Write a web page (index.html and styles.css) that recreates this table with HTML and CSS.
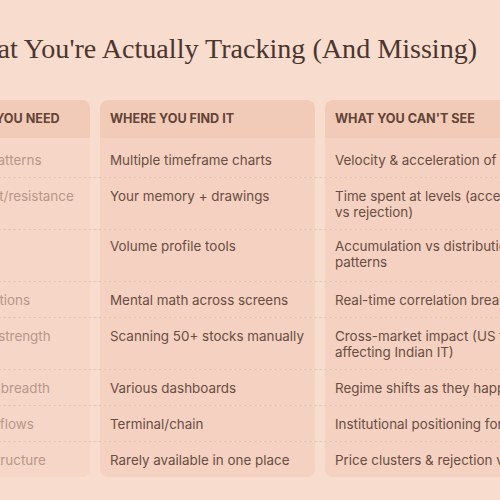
FILE: index.html
```html
<!DOCTYPE html>
<html>
<head>
<meta charset="utf-8">
<link rel="stylesheet" href="styles.css">
</head>
<body>
<div class="page">
  <h1 class="title">What You're Actually Tracking (And Missing)</h1>
  <div class="table">
    <div class="row head">
      <div class="cell c1">WHAT YOU NEED</div>
      <div class="cell c2">WHERE YOU FIND IT</div>
      <div class="cell c3">WHAT YOU CAN'T SEE</div>
    </div>
    <div class="row">
      <div class="cell c1">Price patterns</div>
      <div class="cell c2">Multiple timeframe charts</div>
      <div class="cell c3">Velocity &amp; acceleration of moves</div>
    </div>
    <div class="row">
      <div class="cell c1">Support/resistance</div>
      <div class="cell c2">Your memory + drawings</div>
      <div class="cell c3">Time spent at levels (acceptance vs rejection)</div>
    </div>
    <div class="row">
      <div class="cell c1">Volume</div>
      <div class="cell c2">Volume profile tools</div>
      <div class="cell c3">Accumulation vs distribution patterns</div>
    </div>
    <div class="row">
      <div class="cell c1">Correlations</div>
      <div class="cell c2">Mental math across screens</div>
      <div class="cell c3">Real-time correlation breaks</div>
    </div>
    <div class="row">
      <div class="cell c1">Sector strength</div>
      <div class="cell c2">Scanning 50+ stocks manually</div>
      <div class="cell c3">Cross-market impact (US tech affecting Indian IT)</div>
    </div>
    <div class="row">
      <div class="cell c1">Market breadth</div>
      <div class="cell c2">Various dashboards</div>
      <div class="cell c3">Regime shifts as they happen</div>
    </div>
    <div class="row">
      <div class="cell c1">Money flows</div>
      <div class="cell c2">Terminal/chain</div>
      <div class="cell c3">Institutional positioning for expiry</div>
    </div>
    <div class="row last">
      <div class="cell c1">Microstructure</div>
      <div class="cell c2">Rarely available in one place</div>
      <div class="cell c3">Price clusters &amp; rejection velocity</div>
    </div>
  </div>
</div>
</body>
</html>
```
FILE: styles.css
```css
html, body {
  margin: 0;
  padding: 0;
  background: #f8dccd;
  overflow: hidden;
  width: 500px;
  height: 500px;
}
.page {
  margin-left: -57px;
  width: 620px;
  padding-top: 31px;
}
.title {
  margin: 0 0 33px 14px;
  font-family: "Liberation Serif", serif;
  font-weight: 400;
  font-size: 28.1px;
  line-height: 36px;
  color: #4a362e;
  white-space: nowrap;
}
.table {
  font-family: Inter, "Noto Sans", sans-serif;
  font-size: 13.4px;
  line-height: 16px;
}
.row {
  display: grid;
  grid-template-columns: 147px 215px 232px;
  column-gap: 10px;
  border-bottom: 1px dashed #e8c6b6;
}
.row.head, .row.last {
  border-bottom: none;
}
.cell {
  padding: 9.5px 10px;
  color: #6a4d41;
}
.cell.c1 {
  background: #f6d6c7;
  color: #b8978a;
}
.cell.c2, .cell.c3 {
  background: #f4d1c1;
}
.head .cell {
  background: #f2cbb8;
  font-weight: 700;
  font-size: 12.6px;
  padding: 11px 10px;
  color: #634437;
  border-radius: 8px 8px 0 0;
}
.head .cell.c1 {
  color: #634437;
}
.row:nth-child(2) .cell {
  padding-top: 13.5px;
  padding-bottom: 9.5px;
}
.row:nth-child(4) .cell {
  padding-top: 8px;
  padding-bottom: 11px;
}
.last .cell {
  border-radius: 0 0 8px 8px;
}
```
